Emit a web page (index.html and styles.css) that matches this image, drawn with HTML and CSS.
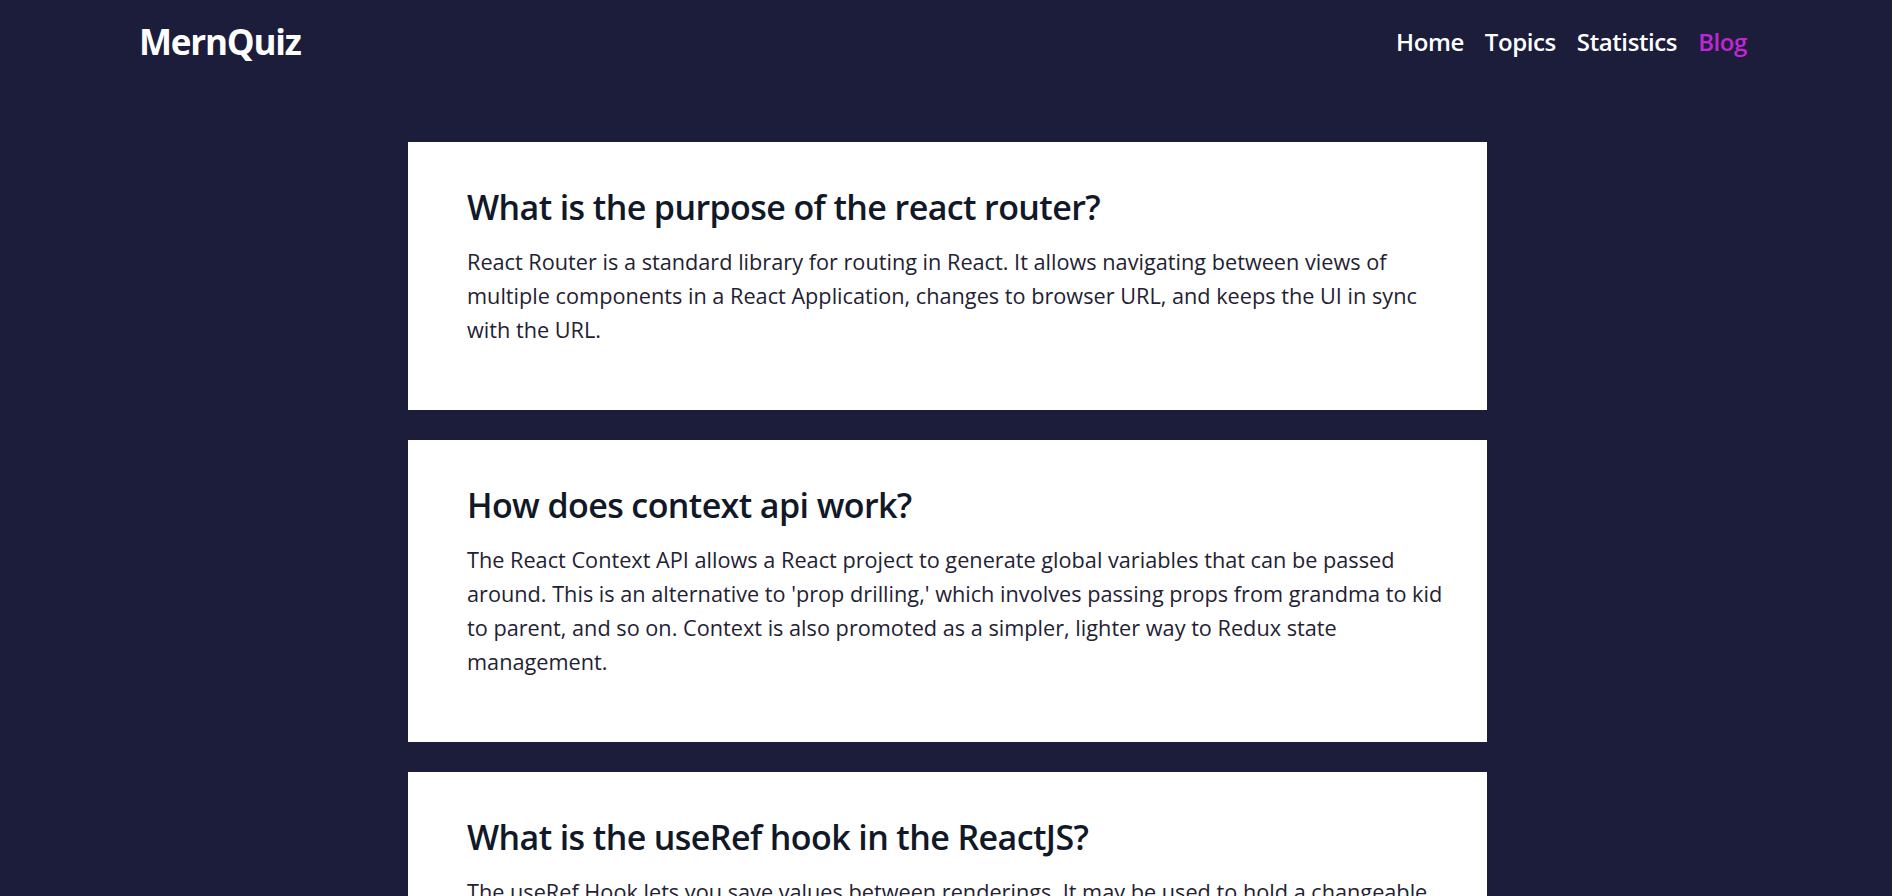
FILE: index.html
```html
<!DOCTYPE html>
<html lang="en">
<head>
<meta charset="utf-8">
<title>MernQuiz - Blog</title>
<link rel="stylesheet" href="styles.css">
</head>
<body>
<header class="site-header">
  <a class="logo" href="#">MernQuiz</a>
  <nav class="nav">
    <a class="nav-link" href="#">Home</a>
    <a class="nav-link" href="#">Topics</a>
    <a class="nav-link" href="#">Statistics</a>
    <a class="nav-link nav-link-active" href="#">Blog</a>
  </nav>
</header>
<main class="blog">
  <article class="card">
    <h2 class="card-title">What is the purpose of the react router?</h2>
    <p class="card-text">React Router is a standard library for routing in React. It allows navigating between views of multiple components in a React Application, changes to browser URL, and keeps the UI in sync with the URL.</p>
  </article>
  <article class="card">
    <h2 class="card-title">How does context api work?</h2>
    <p class="card-text">The React Context API allows a React project to generate global variables that can be passed around. This is an alternative to 'prop drilling,' which involves passing props from grandma to kid to parent, and so on. Context is also promoted as a simpler, lighter way to Redux state management.</p>
  </article>
  <article class="card">
    <h2 class="card-title">What is the useRef hook in the ReactJS?</h2>
    <p class="card-text">The useRef Hook lets you save values between renderings. It may be used to hold a changeable value that does not trigger a re-render when it is updated. It can also be used to directly access a DOM element.</p>
  </article>
</main>
</body>
</html>
```
FILE: styles.css
```css
html {
  scrollbar-width: none;
}
html::-webkit-scrollbar {
  display: none;
}
* {
  box-sizing: border-box;
}
body {
  margin: 0;
  background: #1b1d3a;
  font-family: "Open Sans", "Noto Sans", "Liberation Sans", sans-serif;
  color: #111827;
}
a {
  text-decoration: none;
}
.site-header {
  height: 82px;
  padding: 0 145px 0 139px;
  display: flex;
  align-items: center;
  justify-content: space-between;
}
.logo {
  color: #ffffff;
  font-size: 35px;
  font-weight: 700;
  letter-spacing: -1.2px;
}
.nav {
  display: flex;
  gap: 21px;
}
.nav-link {
  color: #ffffff;
  font-size: 24px;
  font-weight: 600;
  letter-spacing: -0.4px;
}
.nav-link-active {
  color: #c026d3;
}
.blog {
  padding: 60px 0 40px;
  display: flex;
  flex-direction: column;
  align-items: center;
  gap: 30px;
}
.card {
  width: 1079px;
  margin-left: 3px;
  background: #ffffff;
  padding: 44px 40px 63px 59px;
}
.card-title {
  margin: 0;
  font-size: 34px;
  line-height: 42px;
  font-weight: 600;
  letter-spacing: -0.6px;
  color: #111827;
}
.card-text {
  margin: 17px 0 0;
  font-size: 21.7px;
  line-height: 34px;
  font-weight: 400;
  color: #1f2233;
}
```
